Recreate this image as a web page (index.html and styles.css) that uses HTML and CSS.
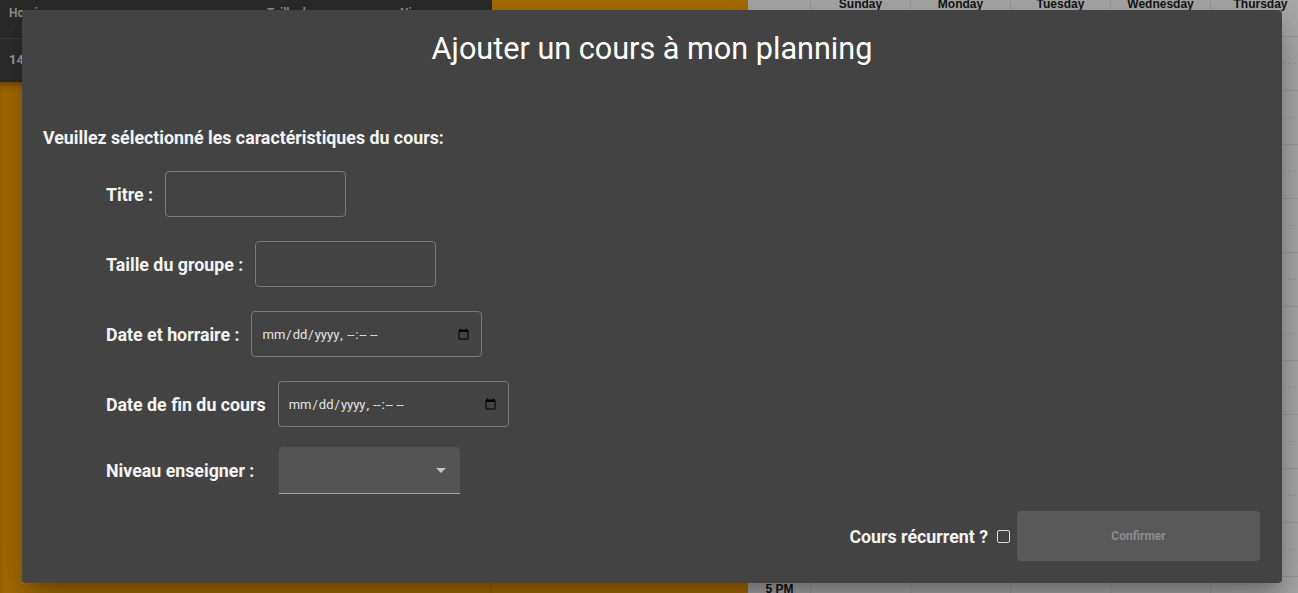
FILE: index.html
```html
<!DOCTYPE html>
<html lang="fr">
<head>
<meta charset="utf-8">
<title>Planning</title>
<link rel="stylesheet" href="styles.css">
</head>
<body>
<div class="page">
  <section class="list">
    <div class="list-head"><span>Horaire</span><span>Taille du groupe</span><span>Niveau</span></div>
    <div class="list-row"><span>14</span></div>
    <div class="list-fill"></div>
  </section>
  <section class="band"></section>
  <section class="calendar">
    <div class="cal-head">
      <div class="cal-cell"></div>
      <div class="cal-cell day"><span>Sunday</span></div>
      <div class="cal-cell day"><span>Monday</span></div>
      <div class="cal-cell day"><span>Tuesday</span></div>
      <div class="cal-cell day"><span>Wednesday</span></div>
      <div class="cal-cell day"><span>Thursday</span></div>
    </div>
    <div class="cal-body">
      <div class="slot"></div><div class="slot half"></div>
      <div class="slot"></div><div class="slot half"></div>
      <div class="slot"></div><div class="slot half"></div>
      <div class="slot"></div><div class="slot half"></div>
      <div class="slot"></div><div class="slot half"></div>
      <div class="slot"></div><div class="slot half"></div>
      <div class="slot"></div><div class="slot half"></div>
      <div class="slot"></div><div class="slot half"></div>
      <div class="slot"></div><div class="slot half"></div>
      <div class="slot"></div><div class="slot half"></div>
      <div class="slot hour"><span>5 PM</span></div>
    </div>
  </section>
</div>

<div class="dialog">
  <h1 class="dialog-title">Ajouter un cours à mon planning</h1>
  <p class="dialog-intro">Veuillez sélectionné les caractéristiques du cours:</p>
  <div class="form">
    <label class="row"><span class="label">Titre :</span><input class="field" type="text"></label>
    <label class="row"><span class="label">Taille du groupe :</span><input class="field" type="text"></label>
    <label class="row"><span class="label">Date et horraire :</span><input class="field date" type="datetime-local"></label>
    <label class="row"><span class="label">Date de fin du cours</span><input class="field date" type="datetime-local"></label>
    <div class="row select-row"><span class="label">Niveau enseigner :</span><div class="select"><span class="arrow"></span></div></div>
  </div>
  <div class="footer">
    <label class="recurrent">Cours récurrent ?<input class="check" type="checkbox"></label>
    <button class="confirm" type="button" disabled>Confirmer</button>
  </div>
</div>
</body>
</html>
```

FILE: styles.css
```css
html, body {
  margin: 0;
  padding: 0;
}
body {
  width: 1298px;
  height: 593px;
  overflow: hidden;
  position: relative;
  font-family: Roboto, "Liberation Sans", Arial, sans-serif;
  background: #a9a9a9;
}
.page {
  display: flex;
  height: 593px;
}
.list {
  width: 492px;
  display: flex;
  flex-direction: column;
  background: #a86e00;
}
.list-head {
  height: 39px;
  box-sizing: border-box;
  background: #2b2b2b;
  border-bottom: 1px solid #3d3d3d;
  display: grid;
  grid-template-columns: 258px 133px 1fr;
  padding-left: 9px;
  font-size: 12px;
  font-weight: bold;
  color: #8e8e8e;
  line-height: 26px;
}
.list-row {
  height: 43px;
  box-sizing: border-box;
  background: #2e2e2e;
  padding-left: 9px;
  line-height: 42px;
  color: #a3a3a3;
  font-weight: bold;
  font-size: 13px;
}
.list-fill {
  flex: 1;
  box-shadow: inset 0 5px 6px -2px rgba(0, 0, 0, 0.35);
}
.band {
  width: 256px;
  background: #a86e00;
}
.calendar {
  flex: 1;
  background: #a9a9a9;
  overflow: hidden;
  font-family: "Liberation Sans", Arial, sans-serif;
}
.cal-head {
  display: grid;
  grid-template-columns: 63px repeat(5, 100px);
  height: 36px;
  border-bottom: 1px solid #999;
}
.cal-cell {
  border-right: 1px solid #999;
  text-align: center;
  font-size: 12px;
  font-weight: bold;
  color: #141414;
  line-height: 12px;
}
.cal-cell span {
  display: block;
  margin-top: -2px;
}
.cal-body {
  width: 563px;
  background:
    linear-gradient(#999, #999) 62px 0 / 1px 100% no-repeat,
    linear-gradient(#999, #999) 162px 0 / 1px 100% no-repeat,
    linear-gradient(#999, #999) 262px 0 / 1px 100% no-repeat,
    linear-gradient(#999, #999) 362px 0 / 1px 100% no-repeat,
    linear-gradient(#999, #999) 462px 0 / 1px 100% no-repeat;
}
.slot {
  height: 27px;
  box-sizing: border-box;
  border-bottom: 1px dashed #9a9a9a;
}
.slot.half {
  border-bottom-style: solid;
}
.slot.hour {
  width: 63px;
  text-align: center;
  font-size: 12px;
  font-weight: bold;
  color: #111;
  line-height: 25px;
  border: 0;
}

/* dialog */
.dialog {
  position: absolute;
  left: 22px;
  top: 10px;
  width: 1260px;
  height: 573px;
  box-sizing: border-box;
  background: #434343;
  border-radius: 4px;
  padding: 19px 22px 22px 21px;
  display: flex;
  flex-direction: column;
  color: #fff;
  box-shadow: 0 11px 15px -7px rgba(0, 0, 0, 0.2), 0 24px 38px 3px rgba(0, 0, 0, 0.14), 0 9px 46px 8px rgba(0, 0, 0, 0.12);
}
.dialog-title {
  margin: 0;
  height: 40px;
  line-height: 40px;
  text-align: center;
  font-size: 30.6px;
  font-weight: 400;
  color: #fff;
  padding-left: 1px;
}
.dialog-intro {
  margin: 59px 0 0;
  height: 20px;
  line-height: 20px;
  font-size: 17.8px;
  font-weight: bold;
  color: #f4f4f4;
}
.form {
  margin-top: 23px;
  padding-left: 63px;
  display: flex;
  flex-direction: column;
  gap: 24px;
}
.row {
  display: flex;
  align-items: center;
  gap: 12px;
  height: 46px;
}
.label {
  font-size: 17.8px;
  font-weight: bold;
  color: #f4f4f4;
  white-space: nowrap;
}
.field {
  width: 181px;
  height: 46px;
  box-sizing: border-box;
  margin: 0;
  background: transparent;
  border: 1px solid #7b7b7b;
  border-radius: 4px;
  color: #e6e6e6;
  font-family: Roboto, "Liberation Sans", sans-serif;
  font-size: 13px;
  padding: 0 9px;
  outline: none;
}
.field.date {
  width: 231px;
  color-scheme: light;
}
.select-row {
  margin-top: -4px;
  height: 47px;
}
.select {
  margin-left: 13px;
  width: 181px;
  height: 47px;
  box-sizing: border-box;
  background: #545454;
  border-bottom: 1px solid #a2a2a2;
  border-radius: 4px 4px 0 0;
  display: flex;
  align-items: center;
  justify-content: flex-end;
  padding-right: 14px;
}
.arrow {
  width: 0;
  height: 0;
  border-left: 5px solid transparent;
  border-right: 5px solid transparent;
  border-top: 5px solid #c4c4c4;
}
.footer {
  margin-top: 17px;
  display: flex;
  justify-content: flex-end;
  align-items: center;
  height: 50px;
}
.recurrent {
  display: flex;
  align-items: center;
  font-size: 17.8px;
  font-weight: bold;
  color: #f4f4f4;
}
.check {
  appearance: none;
  -webkit-appearance: none;
  width: 13px;
  height: 13px;
  box-sizing: border-box;
  margin: 0 7px 0 9px;
  border: 1px solid #dcdcdc;
  border-radius: 2px;
  background: transparent;
}
.confirm {
  width: 243px;
  height: 50px;
  border: 0;
  border-radius: 4px;
  background: #595959;
  color: #8d8d8d;
  font-family: Roboto, "Liberation Sans", sans-serif;
  font-size: 12px;
  font-weight: bold;
}
```
